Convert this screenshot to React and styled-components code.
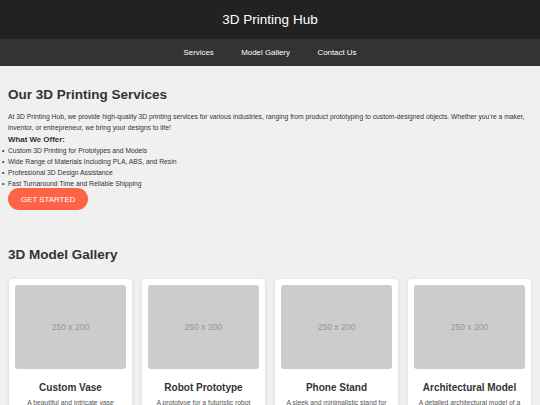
import React from 'react'
import styled, { createGlobalStyle } from 'styled-components'

const GlobalStyle = createGlobalStyle`
    * {
        box-sizing: border-box;
    }

    body {
        margin: 0;
        background: #f0f0f0;
        color: #333;
        font-family: "Liberation Sans", Arial, sans-serif;
    }
`

const Header = styled.header`
    height: 39px;
    display: flex;
    align-items: center;
    justify-content: center;
    background: #222;
    color: #fff;
`

const SiteTitle = styled.h1`
    margin: 0;
    font-size: 13.5px;
    font-weight: normal;
`

const Nav = styled.nav`
    height: 27px;
    display: flex;
    align-items: center;
    justify-content: center;
    gap: 27.5px;
    background: #333;
`

const NavLink = styled.a`
    color: #fff;
    font-size: 7.9px;
    text-decoration: none;
`

const Section = styled.section`
    padding: ${props => props.$top}px 9px 0 8px;
`

const SectionTitle = styled.h2`
    margin: 0;
    font-size: 13.5px;
    line-height: 16px;
    font-weight: bold;
    color: #333;
`

const Intro = styled.p`
    margin: 8.5px 0 0;
    font-size: 6.75px;
    line-height: 11.2px;
`

const OfferTitle = styled.h3`
    margin: 0;
    font-size: 7.9px;
    line-height: 11px;
    font-weight: bold;
`

const OfferList = styled.ul`
    margin: 0;
    padding: 0;
    list-style: none;
    font-size: 6.75px;
    line-height: 11px;

    li::before {
        content: "•";
        display: inline-block;
        width: 6px;
        margin-left: -6px;
    }
`

const StartButton = styled.button`
    display: block;
    margin-top: -0.5px;
    padding: 6.5px 13px;
    border: none;
    border-radius: 12px;
    background: #ff6347;
    color: #fff;
    font-family: inherit;
    font-size: 7.9px;
    line-height: 9px;
    cursor: pointer;
`

const Gallery = styled.div`
    margin: 16px 0 0 1px;
    display: grid;
    grid-template-columns: repeat(4, 123px);
    gap: 10px;
`

const Card = styled.div`
    padding: 6px;
    background: #fff;
    border-radius: 4px;
    box-shadow: 0 1px 4px rgba(0, 0, 0, 0.1);
    text-align: center;
`

const Placeholder = styled.div`
    height: 84px;
    display: flex;
    align-items: center;
    justify-content: center;
    background: #ccc;
    border-radius: 3px;
    color: #969696;
    font-size: 8.5px;
`

const CardTitle = styled.h3`
    margin: 13px 0 0;
    font-size: 10px;
    line-height: 12px;
    color: #333;
`

const CardText = styled.p`
    margin: 4.5px 0 0;
    font-size: 6.75px;
    line-height: 10.8px;
    color: #555;
`

const offers = [
    'Custom 3D Printing for Prototypes and Models',
    'Wide Range of Materials Including PLA, ABS, and Resin',
    'Professional 3D Design Assistance',
    'Fast Turnaround Time and Reliable Shipping',
]

const models = [
    { title: 'Custom Vase', text: 'A beautiful and intricate vase featuring a twisted, organic design.' },
    { title: 'Robot Prototype', text: 'A prototype for a futuristic robot featuring articulated joints.' },
    { title: 'Phone Stand', text: 'A sleek and minimalistic stand for smartphones and tablets.' },
    { title: 'Architectural Model', text: 'A detailed architectural model of a modern residential building.' },
]

export default function App()
{
    return (
        <>
            <GlobalStyle />
            <Header>
                <SiteTitle>3D Printing Hub</SiteTitle>
            </Header>
            <Nav>
                <NavLink href="#services">Services</NavLink>
                <NavLink href="#gallery">Model Gallery</NavLink>
                <NavLink href="#contact">Contact Us</NavLink>
            </Nav>

            <Section id="services" $top={20.7}>
                <SectionTitle>Our 3D Printing Services</SectionTitle>
                <Intro>
                    At 3D Printing Hub, we provide high-quality 3D printing services for various industries, ranging from product prototyping to custom-designed objects. Whether you're a maker, inventor, or entrepreneur, we bring your designs to life!
                </Intro>
                <OfferTitle>What We Offer:</OfferTitle>
                <OfferList>
                    {offers.map((offer) => (
                        <li key={offer}>{offer}</li>
                    ))}
                </OfferList>
                <StartButton>GET STARTED</StartButton>
            </Section>

            <Section id="gallery" $top={36.7}>
                <SectionTitle>3D Model Gallery</SectionTitle>
                <Gallery>
                    {models.map((model) => (
                        <Card key={model.title}>
                            <Placeholder>250 x 200</Placeholder>
                            <CardTitle>{model.title}</CardTitle>
                            <CardText>{model.text}</CardText>
                        </Card>
                    ))}
                </Gallery>
            </Section>
        </>
    )
}
